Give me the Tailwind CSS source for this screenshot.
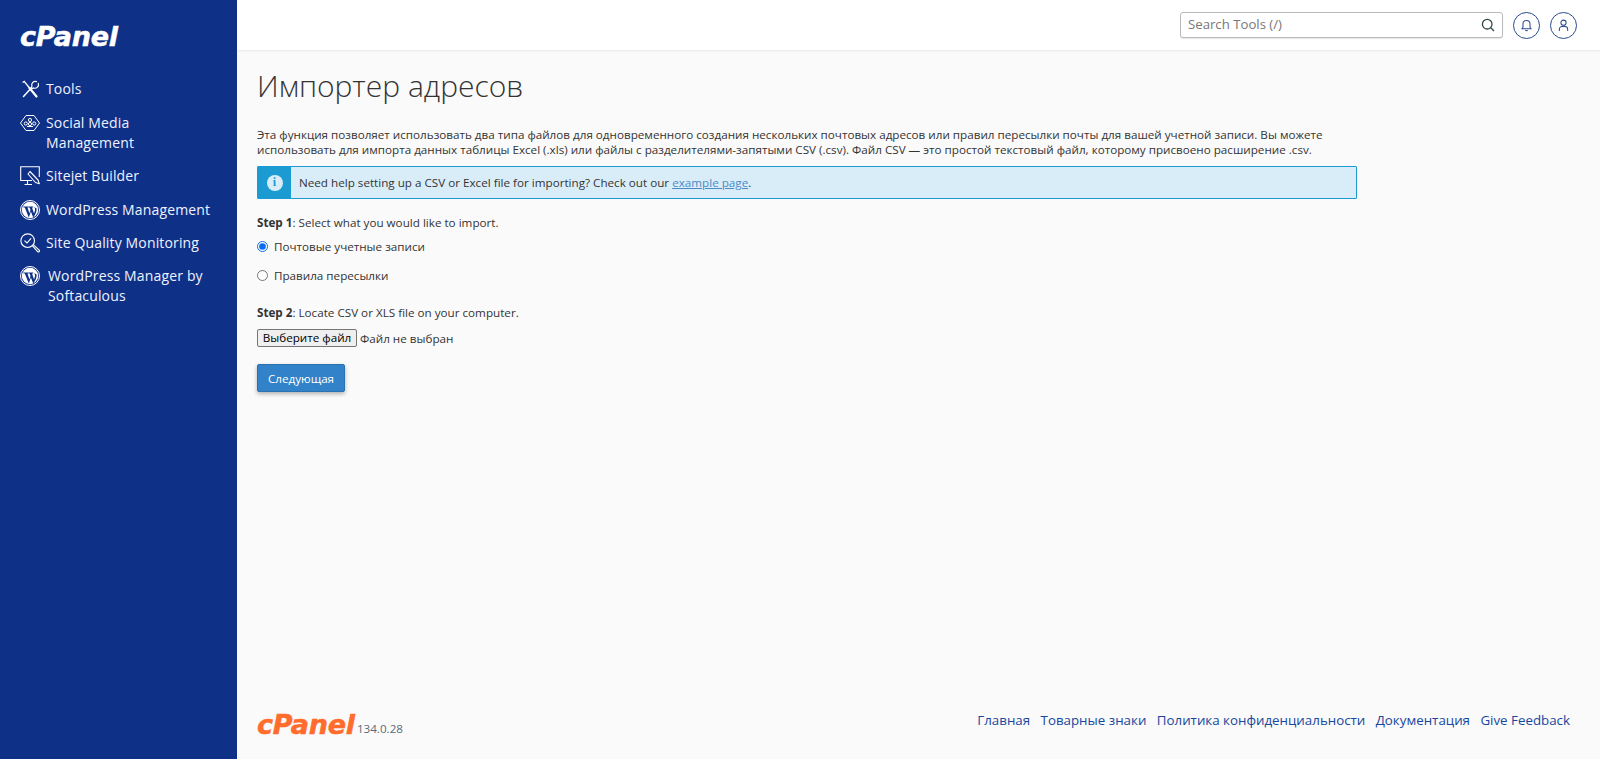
<!DOCTYPE html>
<html lang="ru">
<head>
  <meta charset="UTF-8" />
  <title>cPanel - Импортер адресов</title>
  <script src="https://cdn.jsdelivr.net/npm/@tailwindcss/browser@4"></script>
</head>
<body class="font-['Open_Sans',sans-serif] text-[#333] bg-[#fafafa]">
  <div class="flex h-[759px] overflow-hidden">

    <!-- sidebar -->
    <aside class="w-[237px] shrink-0 bg-[#0e3087] text-[#eef3ff]">
      <div class="h-[70px] pl-[20px] pt-[20px]">
        <span class="block font-['DejaVu_Sans',sans-serif] text-[27px] leading-[34px] font-bold italic tracking-[-0.2px] text-white [-webkit-text-stroke:0.5px_white]">cPanel</span>
      </div>
      <nav class="pt-[2px] text-[14px] leading-[20px] tracking-[0.15px]">
        <a class="flex items-start gap-[6px] pl-[20px] pr-3 pt-[6.7px] pb-[7.5px]">
          <svg class="w-[20px] h-[20px] shrink-0" viewBox="0 0 20 20" fill="none" stroke="white" stroke-width="1.5" stroke-linecap="round">
            <path d="M3.5 17.5 L11.5 8.8" />
            <path d="M16.5 2.6 a3.6 3.6 0 0 0 -4.6 4.6 l-.6 1.4 l1 1 l1.4 -.6 a3.6 3.6 0 0 0 4.6 -4.6" stroke-width="1.2" />
            <path d="M3 3.2 L4.2 2.4 L9.5 9" stroke-width="1.3" />
            <path d="M9.5 9 L16.5 17.5" stroke-width="2.2" />
          </svg>
          <span>Tools</span>
        </a>
        <a class="flex items-start gap-[6px] pl-[20px] pr-3 py-[6.7px]">
          <svg class="w-[20px] h-[20px] shrink-0" viewBox="0 0 20 20" fill="none" stroke="white" stroke-width="1">
            <path d="M6 2.5 H14 L19.5 10 L14 17.5 H6 L.5 10 Z" stroke-linejoin="round" />
            <circle cx="10" cy="7" r="1.6" />
            <circle cx="5.8" cy="10.5" r="1.6" />
            <circle cx="10" cy="11" r="1.6" />
            <circle cx="14.2" cy="10.5" r="1.6" />
            <path d="M7 13.5 H13" />
          </svg>
          <span>Social Media<br>Management</span>
        </a>
        <a class="flex items-start gap-[6px] pl-[20px] pr-3 py-[6.7px]">
          <svg class="w-[20px] h-[20px] shrink-0" viewBox="0 0 20 20" fill="none" stroke="white" stroke-width="1.1">
            <path d="M12 14.5 H.7 V.8 H19.3 V11" />
            <path d="M7.5 14.5 V18 M4.5 18.5 H12 " />
            <path d="M10 5.5 L18 14 L19.3 17.8 L15.5 16.5 L8 8 Z" fill="#0e3087" stroke-linejoin="round" />
          </svg>
          <span>Sitejet Builder</span>
        </a>
        <a class="flex items-start gap-[6px] pl-[20px] pr-3 py-[6.7px]">
          <svg class="w-[20px] h-[20px] shrink-0" viewBox="0 0 20 20">
            <circle cx="10" cy="10" r="9.5" fill="none" stroke="white" stroke-width="1" />
            <circle cx="10" cy="10" r="8.2" fill="white" />
            <path d="M3.4 6.6 H8.6 V7.5 H7.5 L9.4 13.2 L10.5 10 L9.6 7.5 H8.8 V6.6 H13.2 V7.5 H12 L14 13.4 L15 10.4 C15.5 8.8 14.6 8 14.4 7 L16.6 8.4 C17 11 15.4 14.6 13.2 17.4 L10.9 11.4 L8.8 17.4 L4.8 7.5 H3.4 Z" fill="#0e3087" />
          </svg>
          <span>WordPress Management</span>
        </a>
        <a class="flex items-start gap-[6px] pl-[20px] pr-3 pt-[6.7px] pb-[6px]">
          <svg class="w-[20px] h-[20px] shrink-0" viewBox="0 0 20 20" fill="none" stroke="white" stroke-width="1.1">
            <circle cx="7.7" cy="7.7" r="6.8" />
            <path d="M4.8 7.8 L7 10 L10.8 5.6" stroke-linecap="round" />
            <path d="M12.5 12.8 L17.6 18.6 a1.1 1.1 0 0 0 1.6 -1.5 L13.4 11.8" />
          </svg>
          <span>Site Quality Monitoring</span>
        </a>
        <a class="flex items-start gap-[8px] pl-[20px] pr-3 py-[6.7px]">
          <svg class="w-[20px] h-[20px] shrink-0" viewBox="0 0 20 20">
            <circle cx="10" cy="10" r="9.5" fill="none" stroke="white" stroke-width="1" />
            <circle cx="10" cy="10" r="8.2" fill="white" />
            <path d="M3.4 6.6 H8.6 V7.5 H7.5 L9.4 13.2 L10.5 10 L9.6 7.5 H8.8 V6.6 H13.2 V7.5 H12 L14 13.4 L15 10.4 C15.5 8.8 14.6 8 14.4 7 L16.6 8.4 C17 11 15.4 14.6 13.2 17.4 L10.9 11.4 L8.8 17.4 L4.8 7.5 H3.4 Z" fill="#0e3087" />
          </svg>
          <span>WordPress Manager by<br>Softaculous</span>
        </a>
      </nav>
    </aside>

    <div class="flex-1 min-w-0 flex flex-col">
      <!-- top bar -->
      <header class="h-[50px] shrink-0 bg-white shadow-[0_1px_2px_rgba(0,0,0,0.08)] flex items-center justify-end pr-[23px] gap-[10px]">
        <div class="w-[323px] h-[26px] border border-[#bbb] rounded-[3px] bg-white flex items-center justify-between pl-[7px] pr-[7px] shadow-[0_1px_1px_rgba(0,0,0,0.1)]">
          <span class="text-[13.2px] text-[#777]">Search Tools (/)</span>
          <svg class="w-[14px] h-[14px]" viewBox="0 0 14 14" fill="none" stroke="#2f4a4a" stroke-width="1.3">
            <circle cx="6.2" cy="6.2" r="4.8" />
            <path d="M9.8 9.8 L13 13" />
          </svg>
        </div>
        <button class="w-[27px] h-[27px] rounded-full border border-[#2a4a8c] flex items-center justify-center">
          <svg class="w-[13px] h-[13px]" viewBox="0 0 14 14" fill="none" stroke="#2a4a8c" stroke-width="1.1">
            <path d="M2 10.5 H12 L10.8 8.8 V5.5 a3.8 3.8 0 0 0 -7.6 0 V8.8 Z" stroke-linejoin="round" />
            <path d="M5.6 12.5 H8.4" />
          </svg>
        </button>
        <button class="w-[27px] h-[27px] rounded-full border border-[#2a4a8c] flex items-center justify-center">
          <svg class="w-[13px] h-[13px]" viewBox="0 0 14 14" fill="none" stroke="#2a4a8c" stroke-width="1.1">
            <circle cx="7" cy="4" r="2.8" />
            <path d="M2.5 13 V11 a3 3 0 0 1 3 -3 H8.5 a3 3 0 0 1 3 3 V13" />
          </svg>
        </button>
      </header>

      <!-- content -->
      <main class="flex-1 pl-[20px] text-[11.67px] leading-[15px]">
        <div class="w-[1100px]">
          <h1 class="pt-[16px] text-[30px] leading-[40px] font-light text-[#333]">Импортер адресов</h1>
          <p class="mt-[21px]">Эта функция позволяет использовать два типа файлов для одновременного создания нескольких почтовых адресов или правил пересылки почты для вашей учетной записи. Вы можете<br>использовать для импорта данных таблицы Excel (.xls) или файлы с разделителями-запятыми CSV (.csv). Файл CSV — это простой текстовый файл, которому присвоено расширение .csv.</p>

          <div class="mt-[9px] flex h-[33px] border border-[#1b9bd2] rounded-[1px] bg-[#d9edf9]">
            <div class="w-[33px] shrink-0 bg-[#1b9bd2] flex items-center justify-center">
              <span class="w-[16px] h-[16px] rounded-full bg-[#d9edf9] text-[#1b9bd2] text-[12px] font-bold font-['Liberation_Serif',serif] flex items-center justify-center">i</span>
            </div>
            <p class="pl-[8px] flex items-center">Need help setting up a CSV or Excel file for importing? Check out our&nbsp;<a class="text-[#4a8ac8] underline">example page</a>.</p>
          </div>

          <p class="mt-[16px]"><b>Step 1</b>: Select what you would like to import.</p>
          <label class="mt-[9px] flex items-center gap-[6px]">
            <input type="radio" name="kind" checked class="w-[11px] h-[11px] m-0 accent-[#0b6bf0]" />
            <span>Почтовые учетные записи</span>
          </label>
          <label class="mt-[14px] flex items-center gap-[6px]">
            <input type="radio" name="kind" class="w-[11px] h-[11px] m-0" />
            <span>Правила пересылки</span>
          </label>

          <p class="mt-[22px]"><b>Step 2</b>: Locate CSV or XLS file on your computer.</p>
          <div class="mt-[9px] flex items-center gap-[3px]">
            <button class="h-[18px] w-[100px] bg-[#efefef] border border-[#767676] rounded-[2px] text-[11.67px] leading-[16px] text-black font-['Open_Sans',sans-serif]">Выберите файл</button>
            <span>Файл не выбран</span>
          </div>

          <button class="mt-[17px] block h-[28px] w-[88px] rounded-[2px] bg-[#3182c8] border border-[#2a72b0] text-white text-[11.67px] shadow-[0_2px_4px_rgba(0,0,0,0.3)]">Следующая</button>
        </div>
      </main>

      <!-- footer -->
      <footer class="h-[76px] shrink-0 flex items-center justify-between pl-[20px] pr-[30px]">
        <div class="flex items-end gap-[2px] mt-[8px]">
          <span class="font-['DejaVu_Sans',sans-serif] text-[27px] leading-[30px] font-bold italic tracking-[-0.2px] text-[#ff6c2c] [-webkit-text-stroke:0.5px_#ff6c2c]">cPanel</span>
          <span class="text-[11.67px] leading-[18px] mb-[2px] text-[#5b6b78]">134.0.28</span>
        </div>
        <nav class="flex gap-[10.4px] text-[13.33px] text-[#17479e]">
          <a>Главная</a>
          <a>Товарные знаки</a>
          <a>Политика конфиденциальности</a>
          <a>Документация</a>
          <a>Give Feedback</a>
        </nav>
      </footer>
    </div>
  </div>
</body>
</html>
